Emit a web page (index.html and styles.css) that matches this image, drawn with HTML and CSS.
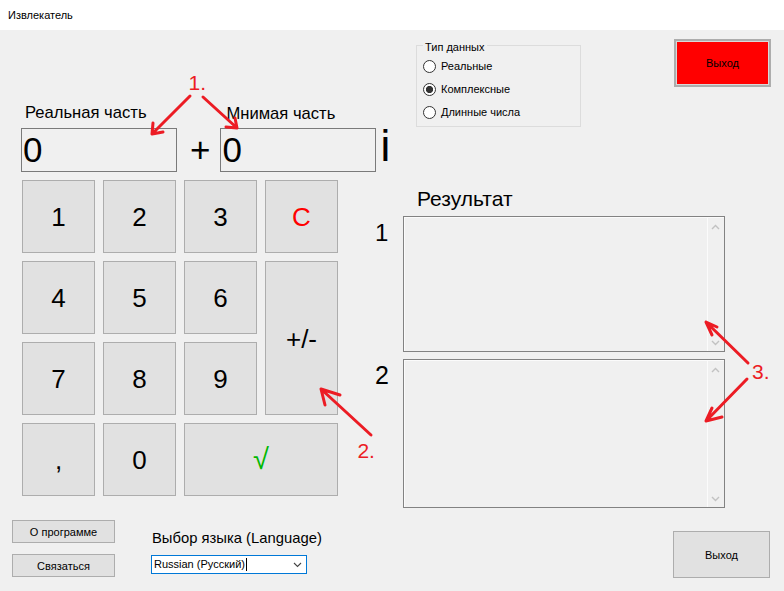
FILE: index.html
```html
<!DOCTYPE html>
<html lang="ru">
<head>
<meta charset="utf-8">
<title>Извлекатель</title>
<link rel="stylesheet" href="styles.css">
</head>
<body>
<div class="window">
  <div class="titlebar">Извлекатель</div>
  <div class="client">
    <div class="upper">
      <div class="fields">
        <div class="field field-re">
          <label class="field-label">Реальная часть</label>
          <input class="num-input" type="text" value="0">
        </div>
        <span class="plus">+</span>
        <div class="field field-im">
          <label class="field-label">Мнимая часть</label>
          <input class="num-input" type="text" value="0">
        </div>
        <span class="imag">i</span>
      </div>
      <div class="typebox">
        <div class="typebox-title">Тип данных</div>
        <div class="radio-row"><span class="radio"></span><span class="radio-text">Реальные</span></div>
        <div class="radio-row"><span class="radio radio-on"></span><span class="radio-text">Комплексные</span></div>
        <div class="radio-row"><span class="radio"></span><span class="radio-text">Длинные числа</span></div>
      </div>
      <button class="btn exit-red">Выход</button>
    </div>

    <div class="middle">
      <div class="keypad">
        <button class="key">1</button>
        <button class="key">2</button>
        <button class="key">3</button>
        <button class="key key-clear">C</button>
        <button class="key">4</button>
        <button class="key">5</button>
        <button class="key">6</button>
        <button class="key key-pm">+/-</button>
        <button class="key">7</button>
        <button class="key">8</button>
        <button class="key">9</button>
        <button class="key">,</button>
        <button class="key">0</button>
        <button class="key key-ok">√</button>
      </div>
      <div class="results">
        <div class="res-title">Результат</div>
        <div class="res-row">
          <span class="res-num">1</span>
          <div class="res-box res-box-1">
            <div class="res-text"></div>
            <div class="vscroll">
              <svg width="9" height="6" viewBox="0 0 9 6"><path d="M1 5 L4.5 1.5 L8 5" fill="none" stroke="#c2c2c2" stroke-width="1.4"/></svg>
              <svg width="9" height="6" viewBox="0 0 9 6"><path d="M1 1 L4.5 4.5 L8 1" fill="none" stroke="#c2c2c2" stroke-width="1.4"/></svg>
            </div>
          </div>
        </div>
        <div class="res-row res-row-2">
          <span class="res-num res-num-2">2</span>
          <div class="res-box res-box-2">
            <div class="res-text"></div>
            <div class="vscroll">
              <svg width="9" height="6" viewBox="0 0 9 6"><path d="M1 5 L4.5 1.5 L8 5" fill="none" stroke="#c2c2c2" stroke-width="1.4"/></svg>
              <svg width="9" height="6" viewBox="0 0 9 6"><path d="M1 1 L4.5 4.5 L8 1" fill="none" stroke="#c2c2c2" stroke-width="1.4"/></svg>
            </div>
          </div>
        </div>
      </div>
    </div>

    <div class="bottom">
      <div class="side">
        <button class="btn small-btn">О программе</button>
        <button class="btn small-btn">Связаться</button>
      </div>
      <div class="lang">
        <div class="lang-label">Выбор языка (Language)</div>
        <div class="combo">
          <span class="combo-text">Russian (Русский)</span><span class="caret"></span>
          <svg class="combo-arrow" width="9" height="6" viewBox="0 0 9 6"><path d="M1 1 L4.5 4.5 L8 1" fill="none" stroke="#444" stroke-width="1.1"/></svg>
        </div>
      </div>
      <button class="btn exit-gray">Выход</button>
    </div>
  </div>

  <svg class="annotations" width="784" height="591" viewBox="0 0 784 591">
    <g fill="none" stroke="#ec1c24" stroke-width="3" stroke-linecap="round" stroke-linejoin="round">
      <path d="M190 96 L152 134 M153 123 L152 134 L163 132"/>
      <path d="M203 97 L237 128 M226 127 L237 128 L235 118"/>
      <path d="M371 435 L321 389 M340 395 L321 389 L325 405"/>
      <path d="M748 363 L706 322 M717 327 L706 322 L712 335"/>
      <path d="M747 379 L706 421 M712 408 L706 421 L722 417"/>
    </g>
    <g class="anno-text" fill="#ec1c24">
      <text x="188.5" y="90">1.</text>
      <text x="357.4" y="458">2.</text>
      <text x="752" y="379">3.</text>
    </g>
  </svg>
</div>
</body>
</html>
```

FILE: styles.css
```css
html, body {
  margin: 0;
  padding: 0;
}
body {
  width: 784px;
  height: 591px;
  overflow: hidden;
  background: #f0f0f0;
  font-family: "Liberation Sans", Arial, sans-serif;
  color: #000;
}
.window {
  position: relative;
  width: 784px;
  height: 591px;
}
.titlebar {
  height: 30px;
  line-height: 30px;
  background: #fff;
  padding-left: 8px;
  font-size: 11px;
}
.client {
  display: flex;
  flex-direction: column;
  height: 561px;
}

/* upper */
.upper {
  display: flex;
  height: 142px;
  padding-left: 21px;
  box-sizing: border-box;
}
.fields {
  align-self: flex-end;
  display: flex;
  align-items: flex-end;
  width: 395px;
}
.field {
  display: flex;
  flex-direction: column;
}
.field-label {
  font-size: 16.6px;
  line-height: 18px;
  margin-bottom: 6px;
  margin-left: 4px;
}
.field-im .field-label {
  margin-left: 6px;
  margin-bottom: 5px;
}
.num-input {
  width: 156px;
  height: 44px;
  box-sizing: border-box;
  border: 1px solid #7a7a7a;
  background: #f0f0f0;
  font-family: "Liberation Sans", Arial, sans-serif;
  font-size: 35px;
  padding: 0 0 0 1px;
  margin: 0;
  color: #000;
  outline: none;
}
.plus {
  height: 44px;
  line-height: 44px;
  font-size: 35px;
  margin: 0 10px 0 13px;
}
.imag {
  height: 44px;
  line-height: 36px;
  font-size: 44px;
  margin-left: 4px;
}
.typebox {
  width: 165px;
  height: 82px;
  box-sizing: border-box;
  margin-top: 15px;
  border: 1px solid #dcdcdc;
  padding: 0 0 0 6px;
  font-size: 11px;
}
.typebox-title {
  width: fit-content;
  margin-top: -5px;
  padding: 0 2px;
  line-height: 13px;
  background: #f0f0f0;
}
.radio-row {
  display: flex;
  align-items: center;
  height: 23px;
}
.typebox-title + .radio-row {
  margin-top: 1px;
}
.radio {
  width: 13px;
  height: 13px;
  box-sizing: border-box;
  border: 1px solid #333;
  border-radius: 50%;
  background: #fff;
}
.radio-on {
  background: radial-gradient(circle, #333 0, #333 3.3px, #fff 3.9px);
}
.radio-text {
  line-height: 13px;
  margin-left: 5px;
}
.btn {
  font-family: "Liberation Sans", Arial, sans-serif;
  font-size: 11px;
  color: #000;
  background: #e1e1e1;
  border: 1px solid #adadad;
  padding: 0;
  margin: 0;
  box-sizing: border-box;
}
.exit-red {
  width: 97px;
  height: 48px;
  margin: 9px 13px 0 auto;
  background: #ff0000;
  border: 2px solid #adadad;
  box-shadow: inset 0 0 0 1px #d9d9d9;
}

/* middle */
.middle {
  display: flex;
  height: 336px;
}
.keypad {
  align-self: flex-start;
  display: grid;
  grid-template-columns: repeat(4, 73px);
  grid-auto-rows: 73px;
  gap: 8px;
  margin: 8px 0 0 22px;
}
.key {
  background: #e1e1e1;
  border: 1px solid #adadad;
  font-family: "Liberation Sans", Arial, sans-serif;
  font-size: 26px;
  color: #000;
  padding: 2px 0 0 0;
  margin: 0;
}
.key-clear {
  color: #ff0000;
}
.key-pm {
  grid-row: span 2;
}
.key-ok {
  grid-column: span 2;
  color: #00b800;
  font-size: 29px;
  padding-top: 0;
}
.results {
  margin-left: 37px;
  display: flex;
  flex-direction: column;
}
.res-title {
  font-size: 21px;
  line-height: 24px;
  margin: 15px 0 5px 42px;
}
.res-row {
  display: flex;
}
.res-row-2 {
  margin-top: 7px;
}
.res-num {
  width: 28px;
  font-size: 24px;
  line-height: 24px;
  padding-top: 5px;
}
.res-num-2 {
  font-size: 25px;
  line-height: 25px;
  padding-top: 4px;
}
.res-box {
  display: flex;
  width: 322px;
  box-sizing: border-box;
  border: 1px solid #828282;
  box-shadow: inset 1px 1px 0 #fbfbfb;
  background: #f0f0f0;
}
.res-box-1 {
  height: 136px;
}
.res-box-2 {
  height: 149px;
}
.res-text {
  flex: 1;
}
.vscroll {
  width: 17px;
  box-sizing: border-box;
  border-left: 1px solid #fbfbfb;
  display: flex;
  flex-direction: column;
  justify-content: space-between;
  align-items: center;
  padding: 7px 2px 5px 0;
}
.vscroll svg {
  display: block;
}

/* bottom */
.bottom {
  display: flex;
  height: 83px;
}
.side {
  display: flex;
  flex-direction: column;
  gap: 11px;
  margin: 12px 0 0 12px;
}
.small-btn {
  width: 103px;
  height: 23px;
}
.lang {
  margin: 22px 0 0 36px;
}
.lang-label {
  font-size: 14.8px;
  line-height: 17px;
  padding-left: 1px;
}
.combo {
  margin-top: 8px;
  width: 156px;
  height: 19px;
  box-sizing: border-box;
  border: 1px solid #0078d7;
  background: #fff;
  display: flex;
  align-items: center;
  padding-left: 2px;
  font-size: 11px;
}
.combo-text {
  line-height: 13px;
}
.caret {
  width: 1px;
  height: 13px;
  background: #000;
  margin-left: 1px;
}
.combo-arrow {
  margin-left: auto;
  margin-right: 4px;
}
.exit-gray {
  width: 97px;
  height: 47px;
  margin: 23px 14px 0 auto;
}

/* annotations overlay */
.annotations {
  position: absolute;
  left: 0;
  top: 0;
  pointer-events: none;
}
.anno-text {
  font-family: "Liberation Sans", Arial, sans-serif;
  font-size: 21px;
}
```
